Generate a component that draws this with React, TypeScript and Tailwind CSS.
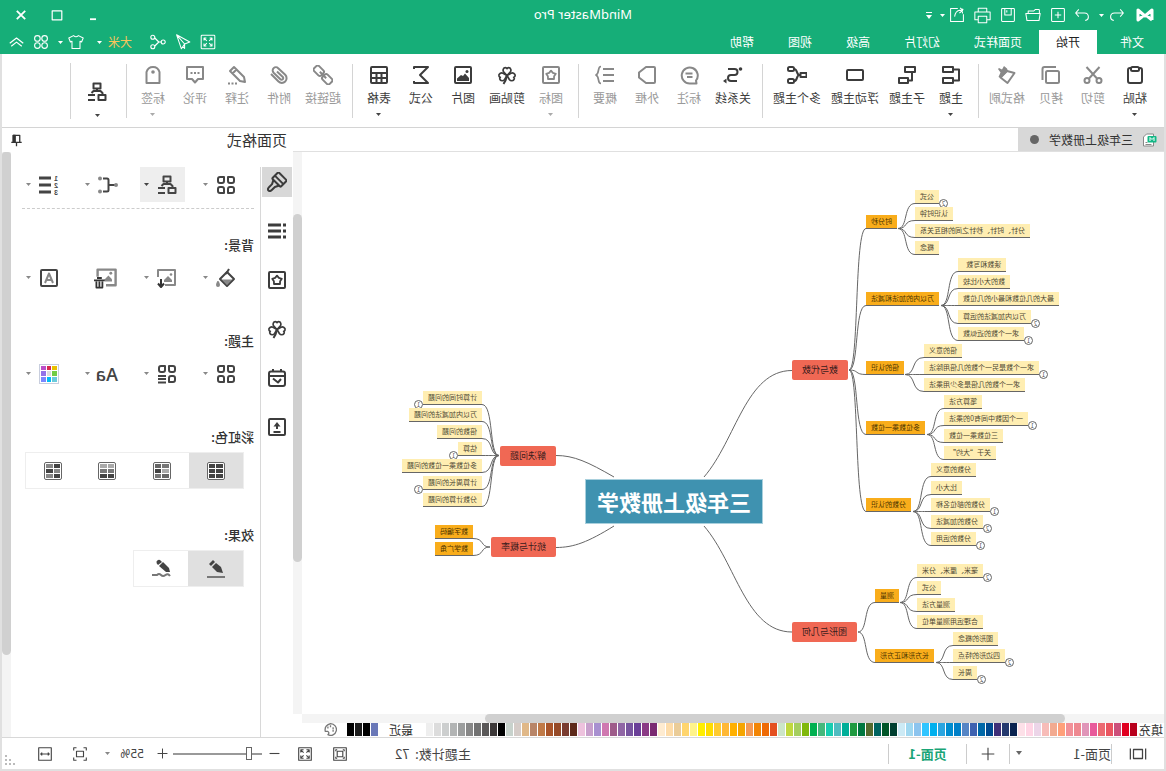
import { useState, type ReactNode } from "react";
import clsx from "clsx";

type IconProps = { children: ReactNode; className?: string; stroke?: number };

function Icon({ children, className = "size-5", stroke = 2 }: IconProps) {
  return (
    <svg
      viewBox="0 0 20 20"
      className={clsx("shrink-0", className)}
      fill="none"
      stroke="currentColor"
      strokeWidth={stroke}
      strokeLinejoin="round"
      aria-hidden="true"
    >
      {children}
    </svg>
  );
}

function Caret({ className = "text-[#444]" }: { className?: string }) {
  return (
    <svg viewBox="0 0 5 3" className={clsx("h-[3px] w-[5px] shrink-0", className)} fill="currentColor" aria-hidden="true">
      <path d="M0 0H5L2.5 3Z" />
    </svg>
  );
}

const heart = "M10 10.5L6.8 7.2C5.4 5.6 6.2 2.6 8.4 2.6Q9.6 2.6 10 3.6Q10.4 2.6 11.6 2.6C13.8 2.6 14.6 5.6 13.2 7.2Z";

const clover = (
  <>
    <path d={heart} strokeWidth="1.7" />
    <path d={heart} strokeWidth="1.7" transform="rotate(-105 10 10.5)" />
    <path d={heart} strokeWidth="1.7" transform="rotate(105 10 10.5)" />
    <path d="M10 10.5Q11 15.5 13.5 19" />
  </>
);

const starBox = (
  <>
    <rect x="2" y="2" width="16" height="16" rx="1" />
    <path d="M10 5.6L11.9 7.9L14.8 8.8L13.1 11.2L13 14H7L6.9 11.2L5.2 8.8L8.1 7.9Z" strokeWidth="1.8" />
  </>
);

const structure = (
  <>
    <rect x="6.5" y="1.5" width="7" height="5" />
    <path d="M10 6.500V9M4.500 12.500V11L6.500 9H13.500L15.500 11" />
    <rect x="1.500" y="13" width="7" height="5" />
    <path d="M12 13H19M12 18H19" />
  </>
);

const grid = (
  <>
    <path d="M2 4Q2 2 4 2H8V6Q8 8 6 8H4Q2 8 2 6Z" />
    <path d="M18 4Q18 2 16 2H12V6Q12 8 14 8H16Q18 8 18 6Z" />
    <path d="M2 14Q2 12 4 12H6Q8 12 8 14V18H4Q2 18 2 16Z" />
  </>
);

const gridCell = <path d="M18 14Q18 12 16 12H14Q12 12 12 14V18H16Q18 18 18 16Z" />;

const picture = (
  <>
    <path d="M4 16V13L8 8.500L10 11L12 10L16 13.500V16Z" fill="currentColor" stroke="none" />
    <circle cx="6" cy="6.500" r="1.500" fill="currentColor" stroke="none" />
  </>
);

const icons: Record<string, ReactNode> = {
  paste: <><rect x="3" y="3" width="14" height="15" rx="2" /><rect x="6" y="2" width="8" height="4" rx="1.500" fill="white" /></>,
  cut: <><path d="M3.500 2L14 13.500M16.500 2L6 13.500" /><circle cx="4" cy="15.500" r="2.500" /><circle cx="16" cy="15.500" r="2.500" /></>,
  copy: <><rect x="2" y="6" width="13" height="12" rx="1.500" /><path d="M5 2H16.500Q18.500 2 18.500 4V15" /></>,
  brush: <><path d="M10 6L2.500 8L9.500 18L16.500 12.500Z" /><path d="M10 3.500L13 1L15 4.500L18 3L19 4L16.500 7.500L18.500 12L16 13L9 6Z" fill="currentColor" stroke="none" /></>,
  topic: <><rect x="8" y="2" width="10" height="5" /><rect x="8" y="13" width="10" height="5" /><path d="M8 4.500H2V15.500H8" /></>,
  subtopic: <><rect x="2" y="2" width="10" height="5" /><rect x="9" y="13" width="9" height="5" /><path d="M5 7V15.500H9" /></>,
  floating: <rect x="2" y="5" width="16" height="10" rx="1" />,
  multiple: <><rect x="0.500" y="8" width="6" height="4" /><rect x="13" y="2" width="6" height="4" rx="1.500" /><rect x="13" y="14" width="6" height="4" rx="1.500" /><path d="M6.500 10H7.500C11 10 9 4 13 4M7.500 10C11 10 9 16 13 16" /></>,
  relation: <><path d="M6 4H12.500A3 3 0 0 1 12.500 10H9A3 3 0 0 0 9 16H15" transform="matrix(-1 0 0 1 21 0)" /><circle cx="2.500" cy="4" r="1.800" fill="currentColor" stroke="none" /><path d="M16.500 13.500L20 16L16.500 18.500Z" fill="currentColor" stroke="none" /></>,
  callout: <><path d="M3 15.500A8 8 0 1 1 9 18.500H2.500Z" /><path d="M6.500 8.500H13.500M6.500 12H12" /></>,
  boundary: <path d="M2 3Q2 2 3 2H11L18 7.500V12.500L11 18H3Q2 18 2 17Z" />,
  summary: <><path d="M1 4H12M1 10H12M1 16H12" /><path d="M14 1.500C18 1.500 15 8 19 10C15 12 18 18.500 14 18.500" strokeWidth="1.700" /></>,
  mark: starBox,
  clipart: clover,
  image: <><rect x="2" y="2" width="16" height="16" rx="1" />{picture}</>,
  formula: <path d="M17 4V2H3L11 10L3 18H17V16" />,
  table: <><rect x="2" y="2" width="16" height="16" rx="1" /><path d="M2 8H18M2 13H18M7.500 8V18M12.500 8V18" /></>,
  link: <g transform="rotate(-45 10 10)"><rect x="-1" y="6.500" width="10" height="7" rx="2" /><rect x="11" y="6.500" width="10" height="7" rx="2" /><path d="M5.500 10H14.500" /></g>,
  attach: <path d="M18 9L10.500 16.500A4.700 4.700 0 0 1 3.800 9.800L10.800 3.200A3.200 3.200 0 0 1 15.400 7.700L8.600 14.200A1.600 1.600 0 0 1 6.200 12L12 6.500" />,
  note: <><path d="M2 17L3 12L13 2L17 6L7 16ZM10.500 4.500L14.500 8.500" /><path d="M10 18.500H12M13.500 18.500H15.500M17 18.500H19" /></>,
  comment: <><path d="M2 2H18V14H13L10 17.500L7 14H2Z" /><path d="M5.500 8H7.500M9 8H11M12.500 8H14.500" /></>,
  tag: <><path d="M3.500 18V7Q5 2 10 2Q15 2 16.500 7V18Z" /><circle cx="10" cy="7" r="1.800" fill="currentColor" stroke="none" /></>,
};

type Tool = { icon: string; label: string; width: string; on?: boolean; menu?: boolean };

const S = "w-[42px]";
const M = "w-[46px]";
const L = "w-[58px]";

const TOOL_GROUPS: Tool[][] = [
  [
    { icon: "paste", label: "粘贴", width: S, on: true, menu: true },
    { icon: "cut", label: "剪切", width: S },
    { icon: "copy", label: "拷贝", width: S },
    { icon: "brush", label: "格式刷", width: M },
  ],
  [
    { icon: "topic", label: "主题", width: S, on: true, menu: true },
    { icon: "subtopic", label: "子主题", width: M, on: true },
    { icon: "floating", label: "浮动主题", width: L, on: true },
    { icon: "multiple", label: "多个主题", width: L, on: true },
  ],
  [
    { icon: "relation", label: "关系线", width: M, on: true },
    { icon: "callout", label: "标注", width: S },
    { icon: "boundary", label: "外框", width: S },
    { icon: "summary", label: "概要", width: S },
  ],
  [
    { icon: "mark", label: "图标", width: S, menu: true },
    { icon: "clipart", label: "剪贴画", width: M, on: true },
    { icon: "image", label: "图片", width: S, on: true },
    { icon: "formula", label: "公式", width: S, on: true },
    { icon: "table", label: "表格", width: S, on: true, menu: true },
  ],
  [
    { icon: "link", label: "超链接", width: M },
    { icon: "attach", label: "附件", width: S },
    { icon: "note", label: "注释", width: S },
    { icon: "comment", label: "评论", width: S },
    { icon: "tag", label: "标签", width: S, menu: true },
  ],
];

const TABS = ["页面样式", "幻灯片", "高级", "视图", "帮助"];

const PALETTE =
  "b8001c e00020 cc4f7a ea5560 ec6a72 e85a9b e095b8 ee8890 f29098 ffa07a f2aa90 f7bcb8 ecd5e8 ffd5e5 fde0e8 0a2350 24396e 3f2f78 004a90 0068a8 3f62b0 5585c5 0080c8 008ccf 2aa5e0 00b0ee 30c5ff 8cc4ee a0d8f0 cceaf5 003f30 005528 006460 556b2f 007840 1f9a40 00ae98 50bcc0 18cdb0 45b87c 00b050 80b80c a5ce60 c0d840 cce5c8 e45020 ee6a05 f28505 f49a55 f5a500 ffb000 ffb835 fecb30 ffdc00 ffee00 fff38a ffd56e eacc98 fddcaa feebd0 7a2a72 8a3a85 6a3f98 78559f 9066a5 9e5c8a cf78b0 a890d0 c8a0cc edc2dd 5e2a1a 7a3c30 964a28 a9552b c07a48 b88568 e0b888 d5ccc8 c8d2cc 000000 3c3838 5a5858 727272 888888 9c9e9e b2b4b4 cccece dcdcdc eeeeee".split(" ");

const RECENT = ["6a78b8", "000000", "1c1c1c", "000000"];

type Leaf = { text: string; y: number; count?: number };
type Branch = { text: string; right: number; y: number; leafRight: number; leaves: Leaf[]; w: number };

// y is always the underline of the node, right its right edge on the canvas
const NUMBERS: Branch[] = [
  {
    text: "时分秒", right: 298, y: 76, leafRight: 249, w: 31,
    leaves: [
      { text: "公式", y: 51, count: 2 },
      { text: "认识时钟", y: 68 },
      { text: "分针、时针、秒针之间的相互关系", y: 85 },
      { text: "概念", y: 102 },
    ],
  },
  {
    text: "万以内的加法和减法", right: 298, y: 153, leafRight: 206, w: 74,
    leaves: [
      { text: "读数和写数  ", y: 119 },
      { text: "数的大小比较", y: 136 },
      { text: "最大的几位数和最小的几位数", y: 153 },
      { text: "万以内加减法的运算", y: 171, count: 2 },
      { text: "求一个数的近似数", y: 188, count: 1 },
    ],
  },
  {
    text: "倍的认识", right: 298, y: 222, leafRight: 240, w: 38,
    leaves: [
      { text: "倍的意义", y: 205 },
      { text: "求一个数是另一个数的几倍用除法", y: 222, count: 1 },
      { text: "求一个数的几倍是多少用乘法", y: 239 },
    ],
  },
  {
    text: "多位数乘一位数", right: 298, y: 282, leafRight: 220, w: 60,
    leaves: [
      { text: "笔算方法", y: 256 },
      { text: "一个因数中间有0的乘法", y: 273, count: 1 },
      { text: "三位数乘一位数", y: 290 },
      { text: "关于“大约”", y: 307 },
    ],
  },
  {
    text: "分数的认识", right: 298, y: 359, leafRight: 233, w: 46,
    leaves: [
      { text: "分数的意义", y: 324 },
      { text: "比大小", y: 342 },
      { text: "分数的部位名称", y: 359, count: 1 },
      { text: "分数的加减法", y: 376, count: 2 },
      { text: "分数的运用", y: 393, count: 1 },
    ],
  },
];

const SHAPES: Branch[] = [
  {
    text: "测量", right: 289, y: 450, leafRight: 247, w: 24,
    leaves: [
      { text: "毫米、厘米、分米", y: 425, count: 2 },
      { text: "公式", y: 442 },
      { text: "测量方法", y: 459 },
      { text: "合理运用测量单位", y: 476 },
    ],
  },
  {
    text: "长方形和正方形", right: 289, y: 510, leafRight: 211, w: 60,
    leaves: [
      { text: "图形的概念", y: 493 },
      { text: "四边形的特点", y: 510, count: 2 },
      { text: "周长", y: 527, count: 2 },
    ],
  },
];

const PROBLEMS: Leaf[] = [
  { text: "计算时间的问题", y: 252, count: 1 },
  { text: "万以内加减法的问题", y: 269 },
  { text: "倍数的问题", y: 286 },
  { text: "估算", y: 303, count: 1 },
  { text: "多位数乘一位数的问题", y: 320 },
  { text: "计算周长的问题", y: 337, count: 1 },
  { text: "分数计算的问题", y: 354 },
];

const STATS: Leaf[] = [
  { text: "数字编码", y: 386 },
  { text: "数学广角", y: 403 },
];

function curve(x0: number, y0: number, x1: number, y1: number) {
  const d = x1 - x0;
  return `M${x0} ${y0}C${x0 + d * 0.6} ${y0} ${x0 + d * 0.3} ${y1} ${x1} ${y1}`;
}

function Topic({ leaf, side, edge, strong }: { leaf: Leaf; side: "left" | "right"; edge: number; strong?: boolean }) {
  return (
    <div
      className={clsx("absolute flex", side === "left" && "left-0 justify-end")}
      style={side === "left" ? { top: leaf.y - 13, width: edge } : { top: leaf.y - 13, left: edge }}
    >
      <div
        className={clsx(
          "relative h-[14px] whitespace-pre border-b border-[#666] px-[5px] text-[7px] leading-[13px]",
          strong ? "bg-[#f9ad1b] text-[#4a3200]" : "bg-[#ffeeb2] text-[#4d4733]"
        )}
      >
        {leaf.text}
        {leaf.count && (
          <span
            className={clsx(
              "absolute top-[9px] flex size-[9px] items-center justify-center rounded-full border border-[#666] bg-white text-[6px] leading-none text-[#555]",
              side === "left" ? "-left-[9px]" : "-right-[9px]"
            )}
          >
            {leaf.count}
          </span>
        )}
      </div>
    </div>
  );
}

const mainNode = "absolute flex h-5 items-center justify-center rounded-xs bg-[#f06854] text-[9px] text-[#3a1c1c]";

function MindMap() {
  const lines: string[] = [];
  for (const [branches, x, y] of [[NUMBERS, 315, 218], [SHAPES, 306, 480]] as const) {
    for (const b of branches) {
      lines.push(curve(x, y, b.right, b.y + 0.5));
      const start = b.right - b.w - 1;
      for (const l of b.leaves) lines.push(curve(start, b.y + 0.5, b.leafRight, l.y + 0.5));
    }
  }
  PROBLEMS.forEach((l) => lines.push(curve(665, 303.5, 682, l.y + 0.5)));
  STATS.forEach((l) => lines.push(curve(674, 395, 691, l.y + 0.5)));
  lines.push("M460 325C428 288 418 218.500 372 218.500");
  lines.push("M460 374C428 411 418 480 372 480");
  lines.push("M550 325C576 310 590 303.500 608 303.500");
  lines.push("M550 374C576 390 590 395.500 608 395.500");

  return (
    <div className="relative min-h-0 min-w-0 flex-1 overflow-hidden bg-white">
      <svg className="absolute left-0 top-0 h-[560px] w-[860px]" viewBox="0 0 860 560" fill="none" stroke="#666" strokeWidth="1" aria-hidden="true">
        {lines.map((d) => <path key={d} d={d} />)}
      </svg>
      <div className="absolute left-[401px] top-[327px] flex h-[45px] w-[178px] items-center justify-center border border-[#a9d0dd] bg-[#3f92b0] text-[22px] font-bold text-white">
        三年级上册数学
      </div>
      <div className={clsx(mainNode, "left-[316px] top-[208px] w-14")}>数与代数</div>
      <div className={clsx(mainNode, "left-[307px] top-[470px] w-[65px]")}>图形与几何</div>
      <div className={clsx(mainNode, "left-[608px] top-[294px] w-14")}>解决问题</div>
      <div className={clsx(mainNode, "left-[608px] top-[385px] w-[65px]")}>统计与概率</div>
      {[...NUMBERS, ...SHAPES].map((b) => (
        <div key={b.text}>
          <Topic leaf={{ text: b.text, y: b.y }} side="left" edge={b.right} strong />
          {b.leaves.map((l) => <Topic key={l.text} leaf={l} side="left" edge={b.leafRight} />)}
        </div>
      ))}
      {PROBLEMS.map((l) => <Topic key={l.text} leaf={l} side="right" edge={682} />)}
      {STATS.map((l) => <Topic key={l.text} leaf={l} side="right" edge={691} strong />)}
    </div>
  );
}

function TitleBar() {
  return (
    <div className="grid h-[30px] grid-cols-3 items-center">
      <div className="flex items-center pl-3 text-white">
        <svg viewBox="0 0 18 14" className="mr-[11px] h-[14px] w-[18px]" fill="none" stroke="currentColor" strokeWidth="3" strokeLinejoin="round" aria-label="MindMaster">
          <path d="M2 12V2L9 8L16 2V12L11 8M2 12L7 8" />
        </svg>
        <button aria-label="撤销"><Icon className="size-4" stroke={1.3}><path d="M6 3L2 7.500L6 12M2 7.500H13Q18 7.500 18 12.500Q18 16 14 17" /></Icon></button>
        <span className="ml-[5px] mr-[9px]"><Caret className="text-white" /></span>
        <button aria-label="恢复" className="mr-2"><Icon className="size-4" stroke={1.3}><path d="M14 3L18 7.500L14 12M18 7.500H7Q2 7.500 2 12.500Q2 16 6 17" /></Icon></button>
        <button aria-label="新建" className="mr-[9px]"><Icon className="size-4" stroke={1.3}><rect x="2" y="2" width="16" height="16" rx="1" /><path d="M10 6V14M6 10H14" /></Icon></button>
        <button aria-label="打开" className="mr-[9px]"><Icon className="size-4" stroke={1.3}><path d="M2 8V4Q2 3 3 3H7L9 5H16V8M1 8H19L17.500 17H2.500Z" /></Icon></button>
        <button aria-label="保存" className="mr-[9px]"><Icon className="size-4" stroke={1.3}><rect x="2" y="2" width="16" height="16" rx="1" /><path d="M6 2V10H14V2M11.500 4V7" /></Icon></button>
        <button aria-label="打印" className="mr-[9px]"><Icon className="size-[17px]" stroke={1.2}><path d="M5 6V1.500H15V6M5 15H1V6H19V15H15M5 11H15V18.500H5Z" /></Icon></button>
        <button aria-label="导出" className="mr-1"><Icon className="size-4" stroke={1.3}><path d="M9 2H18V18H2V9M2 3L6 2M3 8Q3 4 7 4Q12 5 13 12M6 1L3 4.500L7 7.500" /></Icon></button>
        <Caret className="text-white" />
        <button aria-label="自定义" className="ml-2"><svg viewBox="0 0 6 7" className="h-[7px] w-1.5" fill="currentColor"><path d="M0 0H6V1H0ZM0 3H6L3 7Z" /></svg></button>
      </div>
      <h1 className="text-center font-['Noto_Sans',sans-serif] text-[13px] text-white">MindMaster Pro</h1>
      <div className="flex items-center justify-end gap-6 pr-[15px] text-white">
        <button aria-label="最小化"><Icon className="size-3" stroke={3}><path d="M5 17H15" /></Icon></button>
        <button aria-label="最大化"><Icon className="size-3" stroke={2}><path d="M2 3H18V18H2Z" /></Icon></button>
        <button aria-label="关闭"><Icon className="size-3" stroke={3}><path d="M3 3L17 17M17 3L3 17" /></Icon></button>
      </div>
    </div>
  );
}

function MenuBar() {
  return (
    <div className="flex h-6 items-stretch text-xs text-white">
      <button className="ml-[5px] px-[17px]">文件</button>
      <button className="ml-[6px] bg-white px-[17px] text-[#222]">开始</button>
      {TABS.map((t) => <button key={t} className="px-[17px]">{t}</button>)}
      <div className="ml-auto flex items-center pr-[9px]">
        <button aria-label="全屏" className="mr-[9px]"><Icon className="size-4" stroke={1.3}><rect x="1.500" y="1.500" width="17" height="17" rx="1" /><path d="M5 8V5H8M12 5H15V8M15 12V15H12M8 15H5V12M5 5L8.500 8.500M15 5L11.500 8.500M15 15L11.500 11.500M5 15L8.500 11.500" /></Icon></button>
        <button aria-label="发送" className="mr-[9px]"><Icon className="size-4" stroke={1.3}><path d="M18 1L1.500 10L8 12.500L12 18.500ZM18 1L8 12.500V18L10.500 15.500" /></Icon></button>
        <button aria-label="分享" className="mr-[18px]"><Icon className="size-4" stroke={1.4}><circle cx="3.500" cy="10" r="2.500" /><circle cx="16.500" cy="4" r="2.500" /><circle cx="16.500" cy="16" r="2.500" /><path d="M6 10H9L14 5M9 10L14 15" /></Icon></button>
        <button className="mr-[6px] text-[#f8c45c]">大米</button>
        <Caret className="text-white" />
        <button aria-label="皮肤" className="ml-[13px] mr-[5px]"><Icon className="size-4" stroke={1.3}><path d="M7 2Q10 5 13 2L19 5L17 10L15 9V18H5V9L3 10L1 5Z" /></Icon></button>
        <Caret className="text-white" />
        <button aria-label="应用" className="ml-[9px] mr-[9px]"><Icon className="size-4" stroke={1.4}><circle cx="5.500" cy="5.500" r="3.500" /><circle cx="14.500" cy="5.500" r="3.500" /><circle cx="5.500" cy="14.500" r="3.500" /><circle cx="14.500" cy="14.500" r="3.500" /></Icon></button>
        <button aria-label="收起"><Icon className="size-[15px]" stroke={1.6}><path d="M1 11L10 4L19 11M3 15L10 9.500L17 15" /></Icon></button>
      </div>
    </div>
  );
}

function Ribbon() {
  return (
    <div className="flex h-[74px] border-b border-[#d4d4d4] bg-white pl-2">
      {TOOL_GROUPS.map((group) => (
        <div key={group[0].icon} className="flex">
          {group.map((t) => (
            <button
              key={t.icon}
              className={clsx("flex flex-col items-center pt-[11px] text-xs", t.width, t.on ? "text-[#3c3c3c]" : "text-[#999]")}
            >
              <Icon className={t.on ? "size-5" : "size-5 text-[#888]"}>{icons[t.icon]}</Icon>
              <span className="mb-[6px] mt-[4px] whitespace-nowrap leading-[18px]">{t.label}</span>
              {t.menu && <Caret className={t.on ? "text-[#444]" : "text-[#aaa]"} />}
            </button>
          ))}
          <span className="ml-[5px] mr-[6px] mt-[10px] h-[54px] w-px bg-[#d4d4d4]" />
        </div>
      ))}
      <button aria-label="结构" className="flex w-[45px] flex-col items-center pt-[28px] text-[#3c3c3c]">
        <Icon>{structure}</Icon>
        <span className="mt-[12px]"><Caret /></span>
      </button>
      <span className="ml-1 mt-[9px] h-[56px] w-px bg-[#d4d4d4]" />
    </div>
  );
}

function PanelButton({ label, menu = true, active, children }: { label: string; menu?: boolean; active?: boolean; children: ReactNode }) {
  return (
    <button
      aria-label={label}
      className={clsx("flex h-[35px] w-[45px] items-center justify-between pl-2 pr-1 text-[#444]", active && "bg-[#eee]")}
    >
      {children}
      {menu && <Caret className={active ? "text-[#444]" : "text-[#888]"} />}
    </button>
  );
}

const SWATCHES = ["#e8c000", "#d8284f", "#bb4fc8", "#72cc44", "#dddddd", "#9273e8", "#6acbdc", "#00bdf5", "#7a88ff"];

const RAINBOW = [
  ["#444", "#444", "#444", "#444", "#444", "#444"],
  ["#777", "#666", "#aaa", "#444", "#666", "#777"],
  ["#aaa", "#aaa", "#777", "#777", "#444", "#444"],
  ["#444", "#888", "#888", "#444", "#444", "#888"],
];

const SIDE_TABS: [string, ReactNode][] = [
  ["格式", <g transform="rotate(-135 10 10)"><rect x="9" y="4" width="9" height="12" rx="1" /><path d="M13 4V16M9 6L5 8H1Q-2 8 -2 10Q-2 12 1 12H5L9 14" /></g>],
  ["大纲", <path d="M6 4H19M6 10H19M6 16H19M1 4H4M1 10H4M1 16H4" strokeWidth="3" />],
  ["图标", starBox],
  ["剪贴画", clover],
  ["任务", <><rect x="2" y="3.500" width="16" height="14.500" rx="2" /><path d="M2 8H18M6 1V4M14 1V4M6 11L9 14.500L14 10.500" /></>],
  ["导出", <><rect x="2" y="2" width="16" height="16" rx="1" /><path d="M6.500 15H13.500M10 12V7" /><path d="M6.500 9.500L10 5L13.500 9.500Z" fill="currentColor" stroke="none" /></>],
];

const heading = "mt-[36px] text-[13px] font-medium leading-5";
const toolRow = "ml-[10px] flex gap-[14px]";

function FormatPanel() {
  const [tab, setTab] = useState(0);
  const [rainbow, setRainbow] = useState(0);

  return (
    <aside className="flex w-[291px] shrink-0 flex-col text-[#333]">
      <div className="flex h-6 items-center justify-between pl-1.5 pr-2">
        <h2 className="text-[15px] leading-6">页面格式</h2>
        <button aria-label="固定"><Icon className="size-[13px]"><path d="M5 2H15V13H5ZM2 13H18M10 13V19" /><path d="M12 2H15V13H12Z" fill="currentColor" /></Icon></button>
      </div>
      <div className="flex min-h-0 flex-1">
        <nav className="mt-[15px] flex w-[33px] flex-col items-start gap-[19px] border-r border-[#d8d8d8] pl-px">
          {SIDE_TABS.map(([name, icon], i) => (
            <button
              key={name}
              aria-label={name}
              onClick={() => setTab(i)}
              className={clsx("flex size-[30px] items-center justify-center text-[#3c3c3c]", i === tab && "bg-[#d8d8d8]")}
            >
              <Icon>{icon}</Icon>
            </button>
          ))}
        </nav>
        <div className="min-w-0 flex-1 overflow-hidden pl-1.5 pt-[15px] text-sm">
          <div className={toolRow}>
            <PanelButton label="布局"><Icon>{grid}{gridCell}</Icon></PanelButton>
            <PanelButton label="结构" active><Icon>{structure}</Icon></PanelButton>
            <PanelButton label="连接线">
              <Icon>
                <path d="M3 10H9M15 3.500H11Q9.500 3.500 9.500 5V15Q9.500 16.500 11 16.500H15" />
                <g fill="#888" stroke="none"><circle cx="2" cy="10" r="2" /><circle cx="18" cy="3.500" r="2" /><circle cx="18" cy="16.500" r="2" /></g>
              </Icon>
            </PanelButton>
            <PanelButton label="编号">
              <Icon>
                <path d="M8 3H20M8 10H20M8 17H20" strokeWidth="3" />
                <g fill="currentColor" stroke="none" fontSize="7" fontFamily="Liberation Sans" fontWeight="bold"><text x="1" y="6">1</text><text x="1" y="12.500">2</text><text x="1" y="19.500">3</text></g>
              </Icon>
            </PanelButton>
          </div>
          <div className="mr-[11px] mt-[6px] border-t border-dashed border-[#ccc]" />

          <h3 className="mt-[26px] text-[13px] font-medium leading-5">背景:</h3>
          <div className={clsx(toolRow, "mt-[5px]")}>
            <PanelButton label="背景颜色">
              <Icon>
                <path d="M9 4L16 11L9 18L2 11Z" />
                <path d="M4 11.500H14L9 17Z" fill="#888" stroke="none" /><path d="M7 1L10 6" />
                <path d="M18 14Q20 18 18 18Q16 18 18 14Z" fill="#888" stroke="#888" />
              </Icon>
            </PanelButton>
            <PanelButton label="插入背景">
              <Icon className="size-5 text-[#888]">
                <path d="M12 17H2V2H19V9" /><path d="M5 14V12L9 8L13 12V14Z" fill="currentColor" stroke="none" /><circle cx="6" cy="6.500" r="1.300" fill="currentColor" stroke="none" />
                <path d="M16 11V18M13 15.500L16 19L19 15.500" stroke="#333" />
              </Icon>
            </PanelButton>
            <PanelButton label="移除背景" menu={false}>
              <Icon className="size-6 text-[#888]">
                <path d="M10 16H2V3H17V9" /><path d="M5 13V11L8 8L11 11V13Z" fill="currentColor" stroke="none" /><circle cx="6" cy="6" r="1.200" fill="currentColor" stroke="none" />
                <path d="M11 12H20M13.500 10H17.500M13 13V18H18V13M15.500 13V18" stroke="#333" strokeWidth="1.500" />
              </Icon>
            </PanelButton>
            <PanelButton label="水印">
              <Icon><rect x="2" y="2" width="16" height="16" rx="1" /><path d="M6 15L10 5.500L14 15M7.500 12H12.500" stroke="#888" /></Icon>
            </PanelButton>
          </div>

          <h3 className={heading}>主题:</h3>
          <div className={clsx(toolRow, "mt-[5px]")}>
            <PanelButton label="主题"><Icon>{grid}{gridCell}</Icon></PanelButton>
            <PanelButton label="主题样式"><Icon>{grid}<path d="M11 12H19M11 15H19M11 18.500H19" /></Icon></PanelButton>
            <PanelButton label="主题字体"><span className="font-['Open_Sans',sans-serif] text-lg font-semibold leading-none">Aa</span></PanelButton>
            <PanelButton label="主题颜色">
              <span className="grid size-5 grid-cols-3 gap-px border border-[#c8cede] p-px">
                {SWATCHES.map((c) => <span key={c} style={{ backgroundColor: c }} />)}
              </span>
            </PanelButton>
          </div>

          <h3 className={heading}>彩虹色:</h3>
          <div className="ml-[10px] mr-[14px] mt-[5px] grid h-[37px] grid-cols-4 border border-[#eee]">
            {RAINBOW.map((cells, i) => (
              <button
                key={i}
                aria-label={`彩虹色 ${i + 1}`}
                onClick={() => setRainbow(i)}
                className={clsx("flex items-center justify-center", i === rainbow && "bg-[#e0e0e0]")}
              >
                <span className="grid size-[18px] grid-cols-2 gap-px rounded-xs border border-[#666] bg-white p-px">
                  {cells.map((c, n) => <span key={n} style={{ backgroundColor: c }} />)}
                </span>
              </button>
            ))}
          </div>

          <h3 className={heading}>效果:</h3>
          <div className="ml-[10px] mt-[5px] grid h-[37px] w-[111px] grid-cols-2 border border-[#eee] text-[#444]">
            <button aria-label="普通" className="flex items-center justify-center bg-[#e0e0e0]">
              <Icon><path d="M3 14L5 8L10 4L14 8L9 13Z" fill="currentColor" stroke="none" /><path d="M11 3L13 1L17 5L15 7Z" fill="currentColor" stroke="none" /><path d="M1 18H19" stroke="#777" /></Icon>
            </button>
            <button aria-label="手绘" className="flex items-center justify-center">
              <Icon><path d="M1 13L2 9L8 3L12 7L5 13Z" fill="currentColor" stroke="none" /><path d="M9 3L11 1Q13 0 14.500 2.500Q15 4 13 6Z" fill="currentColor" stroke="none" /><path d="M1 17Q3 14 5.500 16T10 16T14 16H19" stroke="#777" /></Icon>
            </button>
          </div>
        </div>
        <div className="w-[9px] bg-[#f4f4f4]">
          <div className="h-[86%] rounded-b-md rounded-t-sm bg-[#d0d0d0]" />
        </div>
      </div>
    </aside>
  );
}

function StatusBar() {
  const [zoom, setZoom] = useState(12);
  const sep = "h-5 w-px bg-[#ccc]";

  return (
    <footer className="flex h-8 shrink-0 items-center border-t border-[#d8d8d8] text-xs text-[#444]">
      <button aria-label="页面视图" className="ml-[17px] mr-[17px]"><Icon className="size-[18px]" stroke={1.4}><rect x="5" y="5" width="10" height="10" /><path d="M1.500 4V16M18.500 4V16" /></Icon></button>
      <span className={sep} />
      <label className="relative flex items-center">
        <select aria-label="页面" className="w-[101px] appearance-none text-[13px]"><option>页面-1</option></select>
        <svg viewBox="0 0 6 4" className="pointer-events-none absolute right-1.5 h-1 w-1.5" fill="#666"><path d="M0 0H6L3 4Z" /></svg>
      </label>
      <span className={sep} />
      <button aria-label="添加页面" className="mx-[14px]"><Icon className="size-[14px]" stroke={1.6}><path d="M10 1V19M1 10H19" /></Icon></button>
      <span className={sep} />
      <button className="w-[77px] text-[13px] font-bold text-[#1aa577]">页面-1</button>
      <span className={sep} />
      <div className="ml-auto flex items-center">
        <span className="mr-[48px] text-[13px]">主题计数: &nbsp;72</span>
        <button aria-label="适应页面" className="mr-[21px]"><Icon className="size-[14px]" stroke={1.6}><rect x="1" y="1" width="18" height="18" /><rect x="6" y="6" width="8" height="8" /><path d="M4 6V4H6M14 4H16V6M16 14V16H14M6 16H4V14" /></Icon></button>
        <button aria-label="全屏" className="mr-[18px]"><Icon className="size-[14px]" stroke={1.6}><rect x="1" y="1" width="18" height="18" /><path d="M4 8V4H8M12 4H16V8M16 12V16H12M8 16H4V12M4 4L8 8M16 4L12 8M16 16L12 12M4 16L8 12" /></Icon></button>
        <button aria-label="缩小" className="mr-[7px]"><Icon className="size-[11px]" stroke={2}><path d="M1 10H19" /></Icon></button>
        <input
          type="range"
          aria-label="缩放"
          value={zoom}
          onChange={(e) => setZoom(Number(e.target.value))}
          className="h-[13px] w-[89px] appearance-none bg-[linear-gradient(#999,#999)] bg-[length:100%_2px] bg-center bg-no-repeat [&::-webkit-slider-thumb]:h-[13px] [&::-webkit-slider-thumb]:w-[6px] [&::-webkit-slider-thumb]:appearance-none [&::-webkit-slider-thumb]:border [&::-webkit-slider-thumb]:border-[#666] [&::-webkit-slider-thumb]:bg-white"
        />
        <button aria-label="放大" className="ml-[5px] mr-[13px]"><Icon className="size-[11px]" stroke={1.8}><path d="M10 1V19M1 10H19" /></Icon></button>
        <label className="relative flex items-center">
          <select aria-label="缩放比例" className="w-[41px] appearance-none font-['Noto_Sans',sans-serif]"><option>55%</option></select>
          <span className="pointer-events-none absolute right-0.5"><Caret className="text-[#888]" /></span>
        </label>
        <button aria-label="适应窗口" className="ml-[16px] mr-[21px]"><Icon className="size-[14px]" stroke={1.6}><rect x="5" y="6" width="10" height="8" /><path d="M1 5V1H5M15 1H19V5M19 15V19H15M5 19H1V15" /></Icon></button>
        <button aria-label="适应宽度" className="mr-[23px]"><Icon className="size-[14px]" stroke={1.6}><rect x="1" y="1" width="18" height="18" /><path d="M4 10H16M6 8L4 10L6 12M14 8L16 10L14 12" /></Icon></button>
        <svg viewBox="0 0 10 10" className="mt-3 mr-[3px] size-[10px]" fill="#bbb"><path d="M8 0H10V2H8ZM8 4H10V6H8ZM4 4H6V6H4ZM8 8H10V10H8ZM4 8H6V10H4ZM0 8H2V10H0Z" /></svg>
      </div>
    </footer>
  );
}

export default function App() {
  return (
    <div className="flex h-screen -scale-x-100 flex-col overflow-hidden bg-white font-['Noto_Sans_CJK_SC',sans-serif]">
      <header className="shrink-0 bg-[#16ae78]">
        <TitleBar />
        <MenuBar />
      </header>
      <div className="flex min-h-0 flex-1 flex-col border-x-2 border-b-2 border-[#e0e0e0]">
        <Ribbon />
        <main className="flex min-h-0 flex-1">
          <section className="flex min-w-0 flex-1 flex-col">
            <div className="flex h-6 shrink-0 border-b border-[#e0e0e0]">
              <button className="flex items-center bg-[#d8d8d8] pl-[7px] pr-[12px] text-xs text-[#333]">
                <svg viewBox="0 0 14 14" className="mr-[9px] h-[14px] w-[15px]" aria-hidden="true">
                  <path d="M3 1H10L13 4V13H3Z" fill="white" stroke="#888" />
                  <path d="M9 9.500H11M5 11.500H11" stroke="#888" />
                  <rect x="0" y="3" width="9" height="6.500" rx="1" fill="#12b886" />
                  <path d="M2.500 8V4.500L4.500 6.500L6.500 4.500V8" stroke="white" fill="none" />
                </svg>
                三年级上册数学
                <span className="ml-[10px] size-[9px] rounded-full bg-[#666]" />
              </button>
            </div>
            <div className="flex min-h-0 flex-1">
              <MindMap />
              <div className="w-[9px] bg-[#f4f4f4] pt-[62px]">
                <div className="h-[348px] rounded-md bg-[#d0d0d0]" />
              </div>
            </div>
            <div className="mr-[9px] h-[9px] shrink-0 bg-[#f4f4f4] pl-[99px]">
              <div className="h-full w-[76%] rounded-md bg-[#d0d0d0]" />
            </div>
            <div className="flex h-[14px] shrink-0 items-start pl-px text-xs leading-[14px] text-[#333]">
              <span className="mr-[2px] shrink-0">填充</span>
              {PALETTE.map((c, i) => <span key={i} className="mr-px h-[13px] w-[7px] shrink-0" style={{ backgroundColor: `#${c}` }} />)}
              <span className="ml-[12px] mr-[11px] shrink-0">最近</span>
              {RECENT.map((c, i) => <span key={i} className="mr-px h-[13px] w-[7px] shrink-0" style={{ backgroundColor: `#${c}` }} />)}
              <button aria-label="调色板" className="ml-[9px] text-[#777]">
                <Icon className="size-[13px]"><path d="M10 1A9 9 0 1 0 14 18Q11 15 14 13H18Q20 4 10 1Z" /><path d="M5 8H7M9 5H11M13 7H15M5 12H7" strokeWidth="3" /></Icon>
              </button>
            </div>
          </section>
          <FormatPanel />
        </main>
        <StatusBar />
      </div>
    </div>
  );
}
